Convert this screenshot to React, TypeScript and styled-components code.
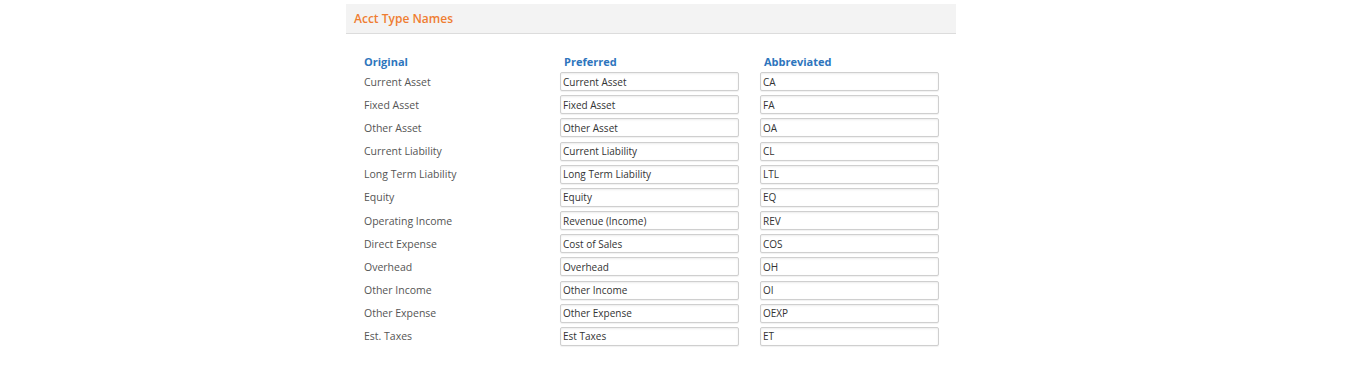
import React from "react";
import styled, { createGlobalStyle } from "styled-components";

const Global = createGlobalStyle`
  html, body { margin: 0; padding: 0; background: #fff; }
  body { font-family: "Open Sans", "Noto Sans", sans-serif; }
`;

const Page = styled.div`
  width: 610px;
  margin-left: 346px;
  padding-top: 4px;
`;

const Header = styled.div`
  height: 29px;
  background: #f3f3f3;
  border-bottom: 1px solid #dcdcdc;
  display: flex;
  align-items: center;
  padding-left: 8px;
`;

const Title = styled.h2`
  margin: 0;
  font-size: 12px;
  font-weight: 600;
  color: #ef7d31;
`;

const Table = styled.div`
  display: grid;
  grid-template-columns: 196px 200px 200px;
  grid-template-rows: 17px;
  grid-auto-rows: 23.18px;
  align-items: center;
  padding: 19px 0 0 18px;
`;

const ColHead = styled.div<{ $shift?: number }>`
  font-size: 11px;
  font-weight: 700;
  color: #2d75bd;
  padding-left: ${(p) => p.$shift ?? 0}px;
`;

const Label = styled.div`
  font-size: 10.5px;
  color: #555;
`;

const Field = styled.input`
  box-sizing: border-box;
  width: 179px;
  height: 19px;
  border: 1px solid #cfcfcf;
  border-radius: 2px;
  box-shadow: inset 0 1px 2px rgba(0,0,0,0.08), 0 1px 1px rgba(0,0,0,0.06);
  padding: 0 2px;
  font-family: "Open Sans", "Noto Sans", sans-serif;
  font-size: 10px;
  color: #333;
  background: #fff;
  outline: none;
`;

const rows: [string, string, string][] = [
  ["Current Asset", "Current Asset", "CA"],
  ["Fixed Asset", "Fixed Asset", "FA"],
  ["Other Asset", "Other Asset", "OA"],
  ["Current Liability", "Current Liability", "CL"],
  ["Long Term Liability", "Long Term Liability", "LTL"],
  ["Equity", "Equity", "EQ"],
  ["Operating Income", "Revenue (Income)", "REV"],
  ["Direct Expense", "Cost of Sales", "COS"],
  ["Overhead", "Overhead", "OH"],
  ["Other Income", "Other Income", "OI"],
  ["Other Expense", "Other Expense", "OEXP"],
  ["Est. Taxes", "Est Taxes", "ET"],
];

export default function App() {
  return (
    <>
      <Global />
      <Page>
        <Header>
          <Title>Acct Type Names</Title>
        </Header>
        <Table>
          <ColHead>Original</ColHead>
          <ColHead $shift={4}>Preferred</ColHead>
          <ColHead $shift={4}>Abbreviated</ColHead>
          {rows.map(([o, p, a]) => (
            <React.Fragment key={o}>
              <Label>{o}</Label>
              <Field defaultValue={p} />
              <Field defaultValue={a} />
            </React.Fragment>
          ))}
        </Table>
      </Page>
    </>
  );
}
